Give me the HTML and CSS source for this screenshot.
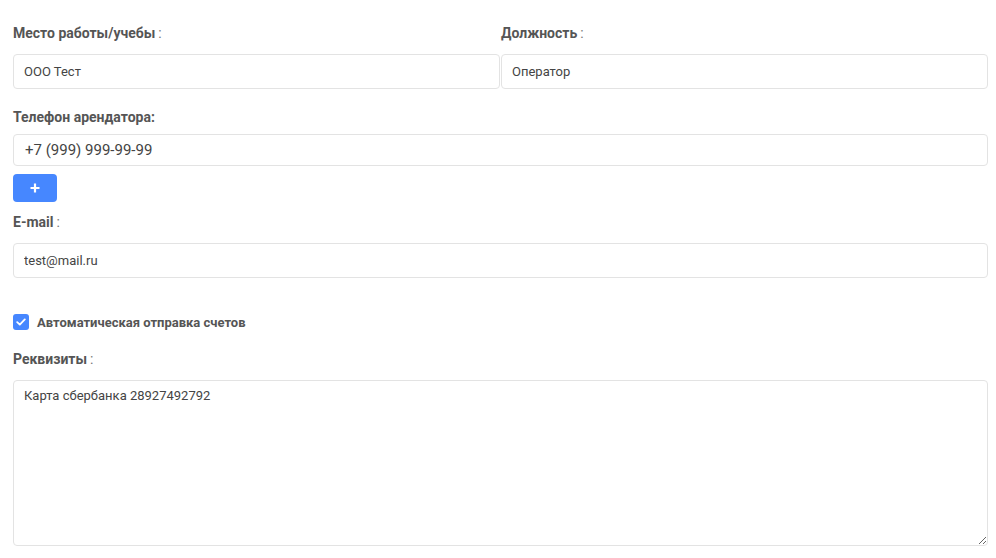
FILE: index.html
```html
<!DOCTYPE html>
<html lang="ru">
<head>
<meta charset="utf-8">
<title>Форма</title>
<link rel="stylesheet" href="styles.css">
</head>
<body>
<form class="form">
  <div class="row two">
    <div class="field">
      <label class="label">Место работы/учебы<span class="colon">:</span></label>
      <input class="input" type="text" value="ООО Тест">
    </div>
    <div class="field">
      <label class="label">Должность<span class="colon">:</span></label>
      <input class="input" type="text" value="Оператор">
    </div>
  </div>

  <div class="field phone-field">
    <label class="label">Телефон арендатора:</label>
    <input class="input phone" type="text" value="+7 (999) 999-99-99">
    <button type="button" class="add-btn">
      <svg width="12" height="12" viewBox="0 0 12 12"><path d="M6 1.5v9M1.5 6h9" stroke="#fff" stroke-width="2.2" stroke-linecap="butt"/></svg>
    </button>
  </div>

  <div class="field email-field">
    <label class="label">E-mail<span class="colon">:</span></label>
    <input class="input" type="text" value="test@mail.ru">
  </div>

  <label class="check">
    <span class="box">
      <svg width="10" height="8" viewBox="0 0 10 8"><path d="M1.2 4.2l2.6 2.4L8.8 1.4" fill="none" stroke="#fff" stroke-width="1.8" stroke-linecap="round" stroke-linejoin="round"/></svg>
    </span>
    <span class="check-text">Автоматическая отправка счетов</span>
  </label>

  <div class="field req-field">
    <label class="label">Реквизиты<span class="colon">:</span></label>
    <textarea class="textarea">Карта сбербанка 28927492792</textarea>
  </div>
</form>
</body>
</html>
```

FILE: styles.css
```css
* { box-sizing: border-box; }

html, body {
  margin: 0;
  padding: 0;
  background: #fff;
}

body {
  font-family: Roboto, "Liberation Sans", Arial, sans-serif;
  color: #444;
}

.form {
  padding: 23px 8px 0 13px;
  display: flex;
  flex-direction: column;
}

.row.two {
  display: grid;
  grid-template-columns: 1fr 1fr;
  column-gap: 1px;
}

.field {
  display: flex;
  flex-direction: column;
}

.label {
  display: block;
  font-size: 14px;
  font-weight: 700;
  line-height: 20px;
  color: #555;
  margin-bottom: 11px;
}

.colon {
  font-weight: 400;
  color: #777;
  margin-left: 3px;
}

.input {
  display: block;
  width: 100%;
  height: 35px;
  border: 1px solid #e3e3e3;
  border-radius: 4px;
  padding: 0 10px;
  font-family: inherit;
  font-size: 13px;
  color: #444;
  background: #fff;
  outline: none;
}

.phone-field {
  margin-top: 18px;
}

.phone-field .label {
  margin-bottom: 7px;
}

.input.phone {
  height: 32px;
  font-size: 15px;
  padding: 0 11px;
}

.add-btn {
  margin-top: 8px;
  width: 44px;
  height: 28px;
  border: none;
  border-radius: 4px;
  background: #4687ff;
  display: flex;
  align-items: center;
  justify-content: center;
  padding: 0;
  cursor: pointer;
}

.email-field {
  margin-top: 10px;
}

.check {
  margin-top: 36px;
  display: flex;
  align-items: center;
  gap: 8px;
  height: 16px;
}

.box {
  width: 16px;
  height: 16px;
  border-radius: 3px;
  background: #4687ff;
  display: flex;
  align-items: center;
  justify-content: center;
}

.check-text {
  font-size: 13px;
  font-weight: 700;
  color: #555;
}

.req-field {
  margin-top: 19px;
}

.textarea {
  display: block;
  width: 100%;
  height: 166px;
  border: 1px solid #e3e3e3;
  border-radius: 4px;
  padding: 7px 10px;
  font-family: inherit;
  font-size: 13px;
  line-height: 16px;
  color: #444;
  resize: vertical;
  outline: none;
}
```
